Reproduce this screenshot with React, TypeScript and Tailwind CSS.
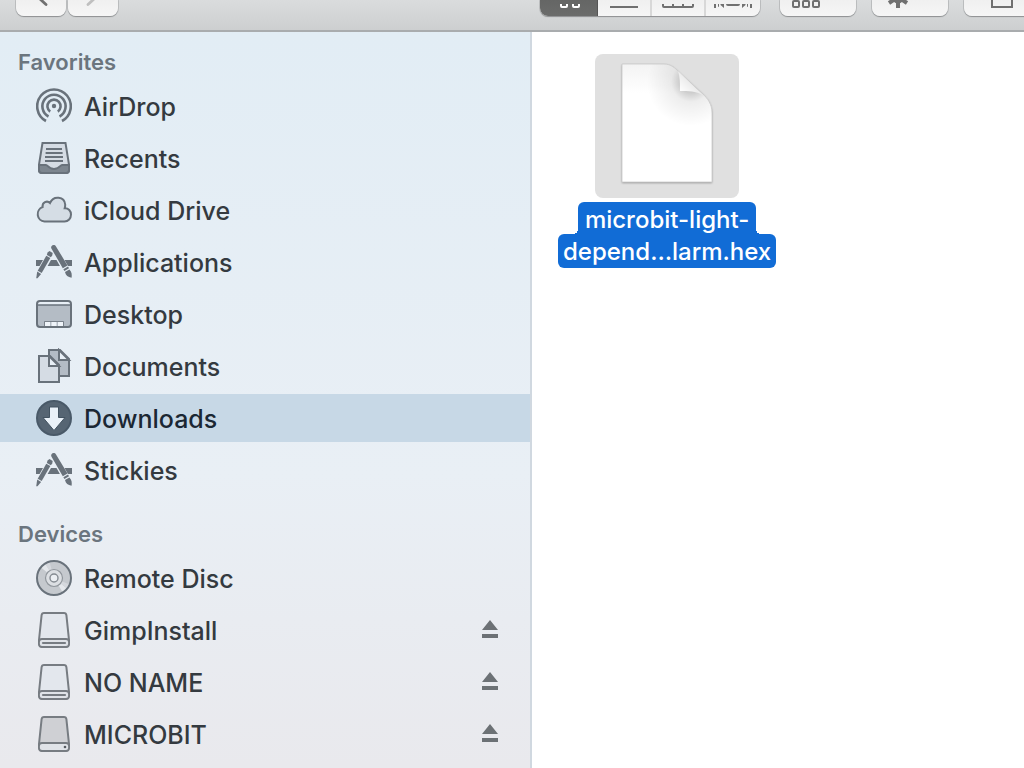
import React from 'react';

const INK = '#69727b';

const AirDropIcon = () => (
  <svg width="36" height="36" viewBox="0 0 36 36" fill="none" stroke={INK} strokeWidth="2.6" aria-hidden="true">
    <path d="M10 33A16.800 16.800 0 1 1 26 33" />
    <path d="M12.500 28.500A11.600 11.600 0 1 1 23.500 28.500" />
    <path d="M14.200 23.600A6.600 6.600 0 1 1 21.800 23.600" />
    <circle cx="18" cy="18" r="2.2" fill={INK} stroke="none" />
  </svg>
);

const RecentsIcon = () => (
  <svg width="36" height="36" viewBox="0 0 36 36" fill="none" aria-hidden="true">
    <path d="M6.500 3h23L33 24.500V30a3 3 0 0 1-3 3H6a3 3 0 0 1-3-3v-5.500z" fill="#d5dce4" stroke={INK} strokeWidth="2" />
    <path d="M10 9h16M9.600 13h17M9 17h18M9 21h18" stroke={INK} strokeWidth="1.800" />
    <path d="M3 25h7c2 0 2 4 8 4s6-4 8-4h7v5a3 3 0 0 1-3 3H6a3 3 0 0 1-3-3z" fill="#7d868f" stroke={INK} strokeWidth="2" />
  </svg>
);

const CloudIcon = () => (
  <svg width="36" height="36" viewBox="0 0 36 36" fill="#d5dde5" stroke={INK} strokeWidth="2" aria-hidden="true">
    <path d="M8.500 29.500A7.500 7.500 0 0 1 6.600 15C6 10.500 11 8 14 11C17.500 3 28.500 4.500 29.200 12.500C29.300 14 29 15.200 28.700 16.200C32.500 16 35 19 35 22.500C35 26.500 32.200 29.500 28.500 29.500Z" />
  </svg>
);

const AppsIcon = () => (
  <svg width="36" height="36" viewBox="0 0 36 36" fill={INK} aria-hidden="true">
    <path d="M0 16h7l-3.400 6H0zM15 16h5.500l3.400 6H11.600zM28.500 16H36v6h-4z" />
    <path d="M11.500 8.500l2-1.500 3.200 2-.5 2.600-1.300 1.600-4-2.300z" />
    <path d="M10.300 11.700l4 2.300-8.600 15-4-2.300z" />
    <path d="M1.200 27.600l3.900 2.300-3.600 4.300H.2z" />
    <path d="M15.500 2.200c1-1.500 3.500-1.500 4.500.2l11.500 19.100-4.700 2.800L15.400 4.500c-.4-.8-.4-1.600.1-2.300z" />
    <path d="M27.400 25.200l4.600-2.800 1 1.800-4.600 2.700z" />
    <path d="M29 28l4.400-2.500c2.600 2.500 2.600 5.500 2.200 8.300-3.600-.8-6-2.300-6.600-5.800z" />
  </svg>
);

const DesktopIcon = () => (
  <svg width="36" height="36" viewBox="0 0 36 36" fill="none" aria-hidden="true">
    <rect x="1" y="5" width="34" height="26" rx="3" fill="#b4bcc5" />
    <path d="M2 9V7a2 2 0 0 1 2-2h28a2 2 0 0 1 2 2v2z" fill="#e8eff6" />
    <path d="M1 9h34" stroke={INK} strokeWidth="1.600" />
    <path d="M9 26h5v4H9zM15.500 26h5v4h-5zM22 26h5v4h-5z" fill="#eff4f9" />
    <path d="M8.500 30v-4.500h19V30" stroke={INK} strokeWidth="0.800" />
    <rect x="1" y="5" width="34" height="26" rx="3" stroke={INK} strokeWidth="2" />
  </svg>
);

const DocumentsIcon = () => (
  <svg width="36" height="36" viewBox="0 0 36 36" fill="none" stroke={INK} strokeWidth="2" aria-hidden="true">
    <path d="M13 2h11l9 9v17H13z" fill="#b4bcc5" />
    <path d="M23 2v10h10z" fill="#e8eff6" />
    <path d="M3 8h11l9 9v17H3z" fill="#d5dce4" />
    <path d="M13 8v10h10z" fill="#e8eff6" />
  </svg>
);

const DownloadsIcon = () => (
  <svg width="36" height="36" viewBox="0 0 36 36" aria-hidden="true">
    <circle cx="18" cy="18" r="17" fill="#566573" stroke="#495968" strokeWidth="2" />
    <path d="M13.500 7h9v10.500h6.500L18 30.500 7 17.500h6.500z" fill="#e9f1f8" stroke="#435361" strokeWidth="1" />
  </svg>
);

const DiscIcon = () => (
  <svg width="36" height="36" viewBox="0 0 36 36" aria-hidden="true">
    <circle cx="18" cy="18" r="17" fill="#c5c9ce" />
    <path d="M18 18L5 7.500 9.500 4zM18 18l13 10.500-4.500 3.500z" fill="#e5e8ec" />
    <path d="M18 18L9.500 4l4-2zM18 18l13 10.500 2.500-4z" fill="#d5d8dd" />
    <circle cx="18" cy="18" r="17" fill="none" stroke={INK} strokeWidth="2" />
    <circle cx="18" cy="18" r="8.500" fill="#dcdfe3" stroke="#90969c" strokeWidth="1.200" />
    <circle cx="18" cy="18" r="4" fill="#eceff3" stroke="#858b92" strokeWidth="1.400" />
  </svg>
);

const DriveIcon = ({ solid = false }: { solid?: boolean }) => (
  <svg width="36" height="36" viewBox="0 0 36 36" fill="none" stroke="#777c82" aria-hidden="true">
    <path d="M8 1h20c1.500 0 2.200.8 2.400 2.200L33 28v3a4 4 0 0 1-4 4H7a4 4 0 0 1-4-4v-3L5.600 3.200C5.800 1.800 6.500 1 8 1z" fill={solid ? '#cfd0d4' : '#e3e7ed'} strokeWidth="2" />
    <rect x="3" y="27" width="30" height="8" rx="3" fill="#e0e3e8" strokeWidth="1.800" />
    {solid ? (
      <circle cx="29" cy="31" r="1.300" fill="#555a60" stroke="none" />
    ) : (
      <path d="M7 31h22" strokeWidth="2.200" strokeLinecap="round" />
    )}
  </svg>
);

const EjectIcon = () => (
  <svg width="16" height="20" viewBox="0 0 16 20" fill="#6c7175" aria-hidden="true">
    <path d="M8 0l8 10H0zM0 14h16v4H0z" />
  </svg>
);

interface SidebarItem {
  label: string;
  icon: React.ReactNode;
  active?: boolean;
  ejectable?: boolean;
}

const favorites: SidebarItem[] = [
  { label: 'AirDrop', icon: <AirDropIcon /> },
  { label: 'Recents', icon: <RecentsIcon /> },
  { label: 'iCloud Drive', icon: <CloudIcon /> },
  { label: 'Applications', icon: <AppsIcon /> },
  { label: 'Desktop', icon: <DesktopIcon /> },
  { label: 'Documents', icon: <DocumentsIcon /> },
  { label: 'Downloads', icon: <DownloadsIcon />, active: true },
  { label: 'Stickies', icon: <AppsIcon /> },
];

const devices: SidebarItem[] = [
  { label: 'Remote Disc', icon: <DiscIcon /> },
  { label: 'GimpInstall', icon: <DriveIcon />, ejectable: true },
  { label: 'NO NAME', icon: <DriveIcon />, ejectable: true },
  { label: 'MICROBIT', icon: <DriveIcon solid />, ejectable: true },
];

const SidebarSection = ({ title, items }: { title: string; items: SidebarItem[] }) => (
  <section>
    <h2 className="px-[18px] pb-1 text-[22px] leading-[32px] font-semibold text-[#6b757e]">{title}</h2>
    <ul className="flex flex-col gap-1">
      {items.map((item) => (
        <li
          key={item.label}
          className={`flex h-12 items-center pr-8 pl-9 ${item.active ? 'bg-[#c7d8e6] text-[#1b2733]' : 'text-[#343a40]'}`}
        >
          <a href="#" aria-current={item.active ? 'page' : undefined} className="flex flex-1 items-center gap-3">
            {item.icon}
            <span className="pt-[2px] text-[25px] leading-[32px] font-medium whitespace-nowrap">{item.label}</span>
          </a>
          {item.ejectable && (
            <button type="button" aria-label={`Eject ${item.label}`}>
              <EjectIcon />
            </button>
          )}
        </li>
      ))}
    </ul>
  </section>
);

const toolButton =
  'flex h-4 shrink-0 items-start justify-center rounded-b-[8px] bg-linear-to-b from-[#f0f0f0] to-[#f6f6f6] shadow-[0_1px_1px_#8f9193,0_0_0_1px_#bfc1c3]';

const Toolbar = () => (
  <header className="flex h-8 shrink-0 overflow-hidden border-b-2 border-[#a9acae] bg-linear-to-b from-[#dadcdd] to-[#cdcfd0]">
    <div className="flex w-[532px] shrink-0 gap-[2px] pl-4">
      <button type="button" aria-label="Back" className={`${toolButton} w-[50px]`}>
        <svg width="50" height="8" viewBox="0 0 50 8" fill="none" stroke="#707070" strokeWidth="2.800" strokeLinecap="round">
          <path d="M24-1l6 5.500" />
        </svg>
      </button>
      <button type="button" aria-label="Forward" className={`${toolButton} w-[50px]`}>
        <svg width="50" height="8" viewBox="0 0 50 8" fill="none" stroke="#bfbfbf" strokeWidth="2.800" strokeLinecap="round">
          <path d="M26-1l-6 5.500" />
        </svg>
      </button>
    </div>
    <div className="flex min-w-0 flex-1 gap-4 pl-2">
      <div className={`${toolButton} w-[220px] overflow-hidden`}>
        <button type="button" aria-label="Icon view" className="h-4 w-[58px] border-r border-[#555] bg-linear-to-b from-[#656665] to-[#6b6c6b]">
          <svg width="57" height="8" viewBox="0 0 57 8" fill="none" stroke="#fff" strokeWidth="2">
            <path d="M21-2v4q0 1 1 1h4q1 0 1-1v-4M33-2v4q0 1 1 1h4q1 0 1-1v-4" />
          </svg>
        </button>
        <button type="button" aria-label="List view" className="h-4 w-[54px] border-r-2 border-[#d8d8d8]">
          <svg width="52" height="8" viewBox="0 0 52 8" stroke="#707070" strokeWidth="2">
            <path d="M12 3h28" />
          </svg>
        </button>
        <button type="button" aria-label="Column view" className="h-4 w-[54px] border-r-2 border-[#d8d8d8]">
          <svg width="52" height="8" viewBox="0 0 52 8" fill="none" stroke="#707070" strokeWidth="2">
            <path d="M11-2v4q0 1 1 1h28q1 0 1-1v-4M21-2v5M31-2v5" />
          </svg>
        </button>
        <button type="button" aria-label="Cover flow" className="h-4 w-[54px]">
          <svg width="54" height="8" viewBox="0 0 54 8" fill="#707070">
            <path d="M8-2h2v6H8zM12-2h1v4.500l-1 .5zM14.500-2h1.500l2 2v4l-3.500-3zM20-2h14v2q0 2-2 2H22q-2 0-2-2zM44-2h2v6h-2zM42-2h-1v4.500l1 .5zM39.500-2h-1.500l-2 2v4l3.500-3z" />
          </svg>
        </button>
      </div>
      <div className="flex gap-4 pl-1">
        <button type="button" aria-label="Arrange" className={`${toolButton} w-[76px]`}>
          <svg width="76" height="12" viewBox="0 0 76 12" fill="none" stroke="#707070" strokeWidth="2">
            <rect x="13" y="1" width="6" height="6" rx="1" />
            <rect x="23" y="1" width="6" height="6" rx="1" />
            <rect x="33" y="1" width="6" height="6" rx="1" />
          </svg>
        </button>
        <button type="button" aria-label="Actions" className={`${toolButton} w-[76px]`}>
          <svg width="76" height="12" viewBox="0 0 76 12" fill="#707070" stroke="#707070" strokeWidth="4">
            <circle cx="26" cy="-3" r="6.500" stroke="none" />
            <path d="M26-3V8M26-3l9 6M26-3l-9 6" />
          </svg>
        </button>
        <button type="button" aria-label="Share" className={`${toolButton} w-[76px]`}>
          <svg width="76" height="12" viewBox="0 0 76 12" fill="none" stroke="#707070" strokeWidth="2">
            <path d="M28-1v8h20v-8" />
          </svg>
        </button>
      </div>
    </div>
  </header>
);

const FileThumbnail = () => (
  <svg width="144" height="144" viewBox="0 0 144 144" aria-hidden="true">
    <defs>
      <linearGradient id="sheet" x1="0" y1="0" x2="0" y2="1">
        <stop offset="0" stopColor="#f3f3f3" />
        <stop offset="0.250" stopColor="#fff" />
      </linearGradient>
      <radialGradient id="curl" gradientUnits="userSpaceOnUse" cx="96" cy="28" r="44">
        <stop offset="0.200" stopColor="#000" stopOpacity="0.220" />
        <stop offset="0.450" stopColor="#000" stopOpacity="0.070" />
        <stop offset="1" stopColor="#000" stopOpacity="0" />
      </radialGradient>
      <linearGradient id="flap" gradientUnits="userSpaceOnUse" x1="85" y1="38" x2="96" y2="27">
        <stop offset="0" stopColor="#fff" />
        <stop offset="1" stopColor="#e9e9e9" />
      </linearGradient>
      <filter id="drop" x="-10%" y="-10%" width="120%" height="120%">
        <feDropShadow dx="0" dy="1" stdDeviation="1" floodOpacity="0.350" />
      </filter>
    </defs>
    <path d="M27 10H69C76 10 80 14 84 18L107 39C113 45 117 50 117 59V128H27Z" fill="url(#sheet)" filter="url(#drop)" />
    <path d="M27 10H69C76 10 80 14 84 18L107 39C113 45 117 50 117 59V128H27Z" fill="url(#curl)" stroke="#c9c9c9" strokeWidth="0.800" />
    <path d="M83 17C85 23 85 29 85 37C93 37 101 37 108 41Z" fill="url(#flap)" />
  </svg>
);

const App: React.FC = () => {
  return (
    <div className="flex min-h-screen flex-col bg-white font-['Inter','Liberation_Sans',sans-serif]">
      <Toolbar />
      <div className="flex flex-1">
        <nav
          aria-label="Sidebar"
          className="flex w-[532px] shrink-0 flex-col gap-6 border-r-2 border-[#d0d8e0] bg-linear-to-b from-[#e2edf5] via-[#e9eff5] via-60% to-[#e9e9ed] pt-[14px] pb-2"
        >
          <SidebarSection title="Favorites" items={favorites} />
          <SidebarSection title="Devices" items={devices} />
        </nav>
        <main className="flex flex-1 items-start pt-[22px] pl-[26px]">
          <button type="button" className="flex flex-col items-center text-white">
            <span className="mb-1 rounded-[8px] bg-[#e0e0e0]">
              <FileThumbnail />
            </span>
            <span className="flex flex-col items-center text-[24px] font-medium whitespace-nowrap">
              <span className="relative rounded-t-[6px] bg-[#116cd6] px-[7px] pt-1 leading-[28px]">
                microbit-light-
                <span className="absolute bottom-0 -left-[5px] size-[5px] bg-[radial-gradient(circle_at_0_0,transparent_5px,#116cd6_5px)]" />
                <span className="absolute -right-[5px] bottom-0 size-[5px] bg-[radial-gradient(circle_at_100%_0,transparent_5px,#116cd6_5px)]" />
              </span>
              <span className="rounded-[6px] bg-[#116cd6] px-[5px] pt-[2px] leading-[32px]">depend…larm.hex</span>
            </span>
          </button>
        </main>
      </div>
    </div>
  );
};

export default App;
